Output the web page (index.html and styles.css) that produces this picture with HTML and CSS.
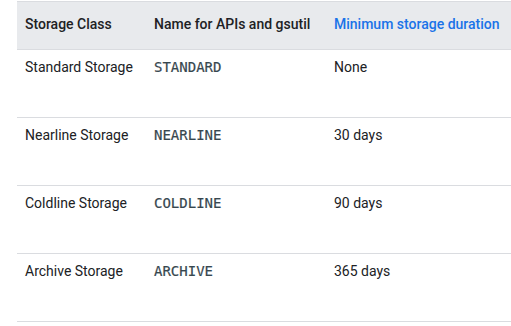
FILE: index.html
```html
<!DOCTYPE html>
<html>
<head>
<meta charset="utf-8">
<link rel="stylesheet" href="styles.css">
</head>
<body>
<div class="wrap">
<table class="storage">
  <colgroup>
    <col class="c1"><col class="c2"><col class="c3">
  </colgroup>
  <thead>
    <tr>
      <th>Storage Class</th>
      <th>Name for APIs and gsutil</th>
      <th><a class="link" href="#">Minimum storage duration</a></th>
    </tr>
  </thead>
  <tbody>
    <tr><td>Standard Storage</td><td><code>STANDARD</code></td><td>None</td></tr>
    <tr><td>Nearline Storage</td><td><code>NEARLINE</code></td><td>30 days</td></tr>
    <tr><td>Coldline Storage</td><td><code>COLDLINE</code></td><td>90 days</td></tr>
    <tr><td>Archive Storage</td><td><code>ARCHIVE</code></td><td>365 days</td></tr>
  </tbody>
</table>
</div>
</body>
</html>
```
FILE: styles.css
```css
html, body {
  margin: 0;
  padding: 0;
  background: #ffffff;
}
.wrap {
  padding: 1px 0 0 17px;
}
.storage {
  border-collapse: collapse;
  table-layout: fixed;
  width: 494px;
  font-family: Roboto, "Liberation Sans", sans-serif;
  font-size: 14px;
  line-height: 20px;
  color: #202124;
  border-top: 1px solid #dadce0;
}
.c1 { width: 129px; }
.c2 { width: 180px; }
.c3 { width: 185px; }
.storage th {
  background: #e8eaed;
  font-weight: 500;
  text-align: left;
  padding: 12px 8px 15px;
  border-bottom: 1px solid #dadce0;
  white-space: nowrap;
}
.storage td {
  padding: 7px 8px 40px;
  border-bottom: 1px solid #dadce0;
  vertical-align: top;
  white-space: nowrap;
}
.link {
  color: #1a73e8;
  text-decoration: none;
}
code {
  font-family: "DejaVu Sans Mono", "Liberation Mono", monospace;
  font-size: 14px;
  color: #37474f;
  -webkit-text-stroke: 0.2px #37474f;
}
```
